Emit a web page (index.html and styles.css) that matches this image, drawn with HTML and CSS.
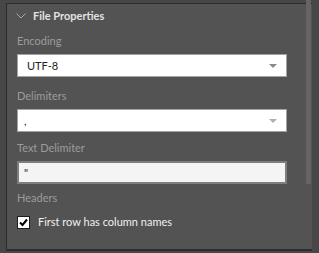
FILE: index.html
```html
<!DOCTYPE html>
<html lang="en">
<head>
    <meta charset="UTF-8">
    <title>File Properties</title>
    <link rel="stylesheet" href="styles.css">
</head>
<body>
    <!-- Properties pane -->
    <div class="pane">
        <div class="section">
            <div class="section-header">
                <svg class="chevron" width="10" height="6" viewBox="0 0 10 6">
                    <polyline points="0.5,0.5 5,5 9.5,0.5" fill="none" stroke="#a8a8a8" stroke-width="1"/>
                </svg>
                <span>File Properties</span>
            </div>

            <div class="field">
                <div class="field-label">Encoding</div>
                <div class="select"><span>UTF-8</span><span class="arrow"></span></div>
            </div>

            <div class="field">
                <div class="field-label">Delimiters</div>
                <div class="select"><span class="value">,</span><span class="arrow light"></span></div>
            </div>

            <div class="field">
                <div class="field-label">Text Delimiter</div>
                <div class="text-input"><span class="value">"</span></div>
            </div>

            <div class="field">
                <div class="field-label">Headers</div>
                <label class="checkbox-row">
                    <span class="checkbox">
                        <svg width="11" height="11" viewBox="0 0 11 11">
                            <polyline points="2,5.5 4.5,8 9,2.5" fill="none" stroke="#000" stroke-width="2"/>
                        </svg>
                    </span>
                    First row has column names
                </label>
            </div>
        </div>
        <div class="scroll-thumb"></div>
    </div>
</body>
</html>
```

FILE: styles.css
```css
body {
    margin: 0;
    background-color: #474747;
    font-family: Lato, "Open Sans", sans-serif;
    font-size: 11px;
    width: 319px;
    height: 253px;
    overflow: hidden;
}

.pane {
    position: relative;
    margin: 3px 0 0 6px;
    width: 306px;
    height: 248px;
    box-sizing: border-box;
    background-color: #535353;
    border-top: 1px solid #2c2c2c;
    border-left: 1px solid #2c2c2c;
    border-bottom: 2px solid #2c2c2c;
}

.section {
    padding: 4px 25px 0 10px;
}

.section-header {
    display: flex;
    align-items: center;
    gap: 7px;
    margin-left: -1px;
    color: #e2e2e2;
    font-size: 11px;
    font-weight: 700;
    line-height: 16px;
}

/* spacing between the fields gets tighter further down */
.field:nth-of-type(2) {
    margin-top: 10px;
}

.field:nth-of-type(3) {
    margin-top: 12px;
}

.field:nth-of-type(4) {
    margin-top: 9px;
}

.field:nth-of-type(5) {
    margin-top: 7px;
}

.field-label {
    color: #9c9c9c;
    line-height: 14px;
    margin-bottom: 6px;
}

.select,
.text-input {
    height: 23px;
    box-sizing: border-box;
    display: flex;
    align-items: center;
    justify-content: space-between;
    background-color: #fff;
    border: 1px solid #a2a2a2;
    color: #222;
    padding: 0 9px;
}

.select .value,
.text-input .value {
    margin-left: -3px;
}

.text-input {
    background-color: #f4f4f4;
    border: 2px solid #7e7e7e;
    padding: 0 8px;
}

.arrow {
    width: 0;
    height: 0;
    border-left: 4px solid transparent;
    border-right: 4px solid transparent;
    border-top: 4px solid #8a8a8a;
}

.arrow.light {
    border-top-color: #b0b0b0;
}

.checkbox-row {
    display: flex;
    align-items: center;
    gap: 8px;
    margin-top: 10px;
    color: #f0f0f0;
    line-height: 14px;
}

.checkbox {
    width: 13px;
    height: 13px;
    box-sizing: border-box;
    border: 1px solid #1e1e1e;
    background-color: #fff;
    display: flex;
    align-items: center;
    justify-content: center;
}

.scroll-thumb {
    position: absolute;
    top: -4px;
    right: 1px;
    width: 5px;
    height: 184px;
    background-color: #646464;
}
```
